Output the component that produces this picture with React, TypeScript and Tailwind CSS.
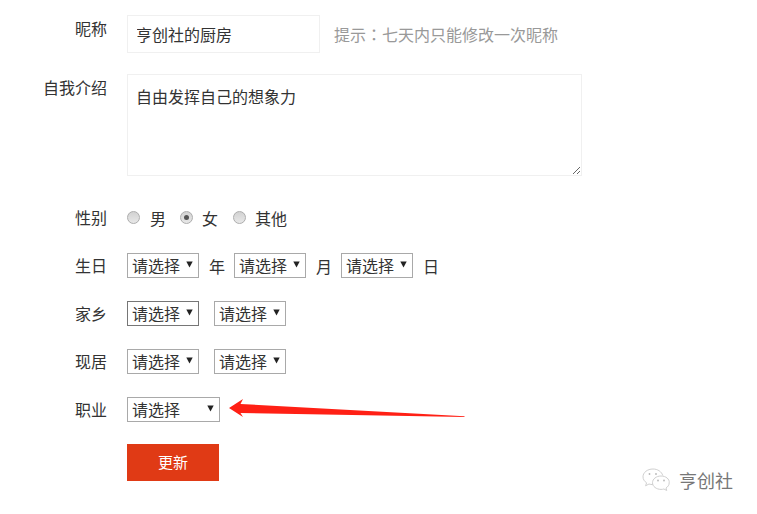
const cjk = "font-['Microsoft_YaHei','Noto_Sans_CJK_SC',sans-serif]";

function Label({ children, top = false }: { children: string; top?: boolean }) {
  return (
    <div className={`w-[107px] shrink-0 text-right leading-[25px] ${top ? "pt-[1px]" : ""}`}>{children}</div>
  );
}

function FakeSelect({ width = "w-[72px]", focused = false }: { width?: string; focused?: boolean }) {
  return (
    <div
      className={`relative h-[25px] ${width} border bg-white pl-[4px] leading-[23px] ${focused ? "border-[#767676]" : "border-[#a9a9a9]"}`}
    >
      请选择
      <svg className="absolute right-[5.500px] top-[6.500px]" width="7" height="7" viewBox="0 0 7 7">
        <path d="M0.300 0.500H6.700L3.500 6.500Z" fill="#222" />
      </svg>
    </div>
  );
}

function Radio({ checked = false }: { checked?: boolean }) {
  return (
    <span className="relative flex h-[13px] w-[13px] items-center justify-center rounded-full border border-[#adadad] bg-gradient-to-b from-[#d2d2d2] to-[#e8e8e8]">
      {checked && <span className="h-[5px] w-[5px] rounded-full bg-[#555]" />}
    </span>
  );
}

function WeChatLogo() {
  return (
    <svg width="30" height="24" viewBox="0 0 30 24" fill="none" stroke="#d0d0d0" strokeWidth="1">
      <path d="M11 1C5.500 1 1 4.400 1 8.800c0 2.500 1.400 4.600 3.600 6l-1 3 3.400-1.800c1.200.4 2.500.6 3.900.6" />
      <path d="M20.800 7.500C19.600 3.600 15.600 1 11 1" />
      <path d="M19 8c-4.700 0-8.500 3-8.500 6.700s3.800 6.700 8.500 6.700c1 0 2-.1 2.900-.4l2.800 1.500-.7-2.500c1.900-1.200 3.200-3 3.200-5.100C27.700 11 23.800 8 19 8z" />
      <circle cx="7.500" cy="6" r="0.900" fill="#b8b8b8" stroke="none" />
      <circle cx="14" cy="6" r="0.900" fill="#b8b8b8" stroke="none" />
      <circle cx="16" cy="12.500" r="0.900" fill="#b8b8b8" stroke="none" />
      <circle cx="22" cy="12.500" r="0.900" fill="#b8b8b8" stroke="none" />
    </svg>
  );
}

export default function App() {
  return (
    <div className={`relative h-[514px] w-[757px] overflow-hidden bg-white pt-[15px] text-[16px] text-[#333] ${cjk}`}>
      {/* nickname */}
      <div className="flex gap-5">
        <Label top>昵称</Label>
        <input
          readOnly
          defaultValue="亨创社的厨房"
          className="h-[38px] w-[193px] border border-[#f0f0f0] pl-[9px] pr-[9px] indent-[-1px] text-[16px] outline-none"
        />
        <div className="ml-[-6px] pt-[7px] leading-[24px] text-[#999]">
          提示<span className="font-['Noto_Sans_CJK_TC',sans-serif]">：</span>七天内只能修改一次昵称
        </div>
      </div>

      {/* intro */}
      <div className="mt-[21px] flex gap-5">
        <Label top>自我介绍</Label>
        <textarea
          readOnly
          defaultValue="自由发挥自己的想象力"
          className="h-[102px] w-[455px] border border-[#f0f0f0] pb-[11px] pl-[8px] pr-[9px] pt-[9px] text-[16px] leading-[24px] outline-none"
        />
      </div>

      <div className="mt-[29px] flex flex-col gap-[23px]">
        {/* gender */}
        <div className="flex h-[25px] items-center gap-5">
          <Label>性别</Label>
          <div className="flex items-center">
            <Radio />
            <span className="ml-[10px] w-[30px]">男</span>
            <Radio checked />
            <span className="ml-[9px] w-[31px]">女</span>
            <Radio />
            <span className="ml-[9px]">其他</span>
          </div>
        </div>

        {/* birthday */}
        <div className="flex gap-5">
          <Label>生日</Label>
          <div className="flex items-center">
            <FakeSelect />
            <span className="ml-[10px] mr-[9px]">年</span>
            <FakeSelect />
            <span className="ml-[10px] mr-[9px]">月</span>
            <FakeSelect />
            <span className="ml-[10px]">日</span>
          </div>
        </div>

        {/* hometown */}
        <div className="flex gap-5">
          <Label>家乡</Label>
          <div className="flex gap-[15px]">
            <FakeSelect focused />
            <FakeSelect />
          </div>
        </div>

        {/* residence */}
        <div className="flex gap-5">
          <Label>现居</Label>
          <div className="flex gap-[15px]">
            <FakeSelect />
            <FakeSelect />
          </div>
        </div>

        {/* job */}
        <div className="flex gap-5">
          <Label>职业</Label>
          <FakeSelect width="w-[93px]" />
        </div>
      </div>

      <button
        type="button"
        className="ml-[127px] mt-[22px] h-[37px] w-[92px] bg-[#e03a15] text-[15px] text-white"
      >
        更新
      </button>

      {/* annotation arrow */}
      <svg className="absolute left-[225px] top-[395px]" width="245" height="27" viewBox="0 0 245 27">
        <path d="M4 13L18 4L15.500 9L239.500 21.200L239.500 22L15.500 18L18 22Z" fill="#ff2015" />
      </svg>

      {/* watermark */}
      <div className="absolute left-[642px] top-[468px] flex items-center gap-[7px] text-[18px] leading-[24px] text-[#777]">
        <WeChatLogo />
        <span>亨创社</span>
      </div>
    </div>
  );
}
